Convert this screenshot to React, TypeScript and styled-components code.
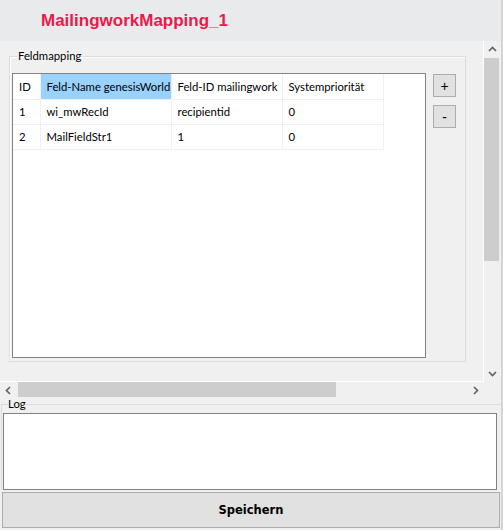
import React from "react";
import styled, { createGlobalStyle } from "styled-components";

const Global = createGlobalStyle`
  html, body { margin: 0; padding: 0; background: #f0f0f0; }
  body { font-family: Lato, "Liberation Sans", sans-serif; font-size: 11.3px; color: #000; }
`;

const Window = styled.div`
  width: 503px;
  height: 530px;
  display: flex;
  flex-direction: column;
  box-sizing: border-box;
  background: #f0f0f0;
  border-right: 2px solid #d4d4d4;
  overflow: hidden;
`;

const Header = styled.div`
  height: 41px;
  flex: none;
  background: #e9eaec;
  display: flex;
  align-items: center;
  padding-left: 41px;
  box-sizing: border-box;
`;

const Title = styled.h1`
  margin: 0;
  font-family: "Liberation Sans", Arial, sans-serif;
  font-weight: bold;
  font-size: 17px;
  color: #ea1a4c;
`;

const ScrollArea = styled.div`
  height: 358px;
  flex: none;
  display: grid;
  grid-template-columns: 484px 17px;
  grid-template-rows: 341px 17px;
`;

const Viewport = styled.div`
  border-right: 1px solid #ffffff;
  border-bottom: 1px solid #ffffff;
  box-sizing: border-box;
  padding: 9px 0 0 9px;
`;

const GroupBox = styled.fieldset`
  margin: 0;
  width: 457px;
  height: 312px;
  box-sizing: border-box;
  border: 1px solid #dcdcdc;
  box-shadow: inset 1px 1px 0 #ffffff;
  padding: 11px 9px 2px 2px;
  display: flex;
  align-items: flex-start;
  gap: 7px;
  min-width: 0;
`;

const Legend = styled.legend`
  padding: 0 1px;
  margin-left: 5px;
  font-size: 11.3px;
  line-height: 12px;
`;

const TableFrame = styled.div`
  width: 414px;
  height: 285px;
  flex: none;
  box-sizing: border-box;
  border: 1px solid #828282;
  background: #fff;
`;

const Grid = styled.table`
  border-collapse: collapse;
  table-layout: fixed;
  width: 370px;
`;

const Cell = styled.td<{ $w: number; $sel?: boolean }>`
  width: ${(p) => p.$w}px;
  height: 25px;
  padding: 0 0 0 6px;
  box-sizing: border-box;
  border-right: 1px solid #f0f0f0;
  border-bottom: 1px solid #f0f0f0;
  background: ${(p) => (p.$sel ? "#99d1ff" : "#fff")};
  white-space: nowrap;
  font-size: 11.3px;
`;

const ButtonCol = styled.div`
  display: flex;
  flex-direction: column;
  gap: 8px;
  margin-top: 1px;
`;

const SmallButton = styled.button`
  width: 23px;
  height: 23px;
  padding: 0;
  background: #e1e1e1;
  border: 1px solid #adadad;
  font-family: "Liberation Sans", Arial, sans-serif;
  font-size: 14px;
  line-height: 1;
  color: #000;
`;

const VScroll = styled.div`
  display: flex;
  flex-direction: column;
  background: #f0f0f0;
`;

const HScroll = styled.div`
  display: flex;
  background: #f0f0f0;
`;

const Arrow = styled.div`
  flex: none;
  width: 17px;
  height: 17px;
  display: flex;
  align-items: center;
  justify-content: center;
`;

const Track = styled.div`
  flex: 1;
  display: flex;
  min-width: 0;
  min-height: 0;
`;

const Thumb = styled.div<{ $vertical?: boolean }>`
  background: #cdcdcd;
  ${(p) => (p.$vertical ? "height: 203px; width: 15px;" : "width: 318px; height: 15px; margin-left: 1px;")}
`;

const Corner = styled.div`
  background: #f0f0f0;
`;

const LogBox = styled.fieldset`
  margin: 0 0 0 1px;
  padding: 0 0 0 1px;
  border: none;
  border-top: 1px solid #dcdcdc;
  border-left: 1px solid #dcdcdc;
  min-width: 0;
  display: flex;
  flex-direction: column;
`;

const LogLegend = styled.legend`
  padding: 0;
  margin-left: 5px;
  font-size: 11.3px;
  line-height: 10px;
`;

const LogArea = styled.div`
  width: 494px;
  height: 77px;
  box-sizing: border-box;
  margin-top: 4px;
  background: #fff;
  border: 1px solid #828282;
`;

const SaveButton = styled.button`
  margin: 2px 0 0 2px;
  width: 498px;
  height: 36px;
  box-sizing: border-box;
  background: #e1e1e1;
  border: 1px solid #adadad;
  font-family: "DejaVu Sans", Verdana, sans-serif;
  font-weight: bold;
  font-size: 11.5px;
  color: #000;
  padding: 0;
`;

const Chevron = ({ dir }: { dir: "up" | "down" | "left" | "right" }) => {
  const pts: Record<string, string> = {
    up: "1,6 4.5,2.5 8,6",
    down: "1,3 4.5,6.5 8,3",
    left: "6,1 2.5,4.5 6,8",
    right: "3,1 6.5,4.5 3,8",
  };
  return (
    <svg width="9" height="9" viewBox="0 0 9 9">
      <polyline points={pts[dir]} fill="none" stroke="#606060" strokeWidth="1.6" />
    </svg>
  );
};

const cols = [27, 131, 111, 101];
const rows = [
  ["ID", "Feld-Name genesisWorld", "Feld-ID mailingwork", "Systempriorität"],
  ["1", "wi_mwRecId", "recipientid", "0"],
  ["2", "MailFieldStr1", "1", "0"],
];

export default function App() {
  return (
    <Window>
      <Global />
      <Header>
        <Title>MailingworkMapping_1</Title>
      </Header>
      <ScrollArea>
        <Viewport>
          <GroupBox>
            <Legend>Feldmapping</Legend>
            <TableFrame>
              <Grid>
                <tbody>
                  {rows.map((r, i) => (
                    <tr key={i}>
                      {r.map((c, j) => (
                        <Cell key={j} $w={cols[j]} $sel={i === 0 && j === 1}>
                          {c}
                        </Cell>
                      ))}
                    </tr>
                  ))}
                </tbody>
              </Grid>
            </TableFrame>
            <ButtonCol>
              <SmallButton>+</SmallButton>
              <SmallButton>-</SmallButton>
            </ButtonCol>
          </GroupBox>
        </Viewport>
        <VScroll>
          <Arrow>
            <Chevron dir="up" />
          </Arrow>
          <Track>
            <Thumb $vertical />
          </Track>
          <Arrow>
            <Chevron dir="down" />
          </Arrow>
        </VScroll>
        <HScroll>
          <Arrow>
            <Chevron dir="left" />
          </Arrow>
          <Track>
            <Thumb />
          </Track>
          <Arrow>
            <Chevron dir="right" />
          </Arrow>
        </HScroll>
        <Corner />
      </ScrollArea>
      <LogBox>
        <LogLegend>Log</LogLegend>
        <LogArea />
      </LogBox>
      <SaveButton>Speichern</SaveButton>
    </Window>
  );
}
